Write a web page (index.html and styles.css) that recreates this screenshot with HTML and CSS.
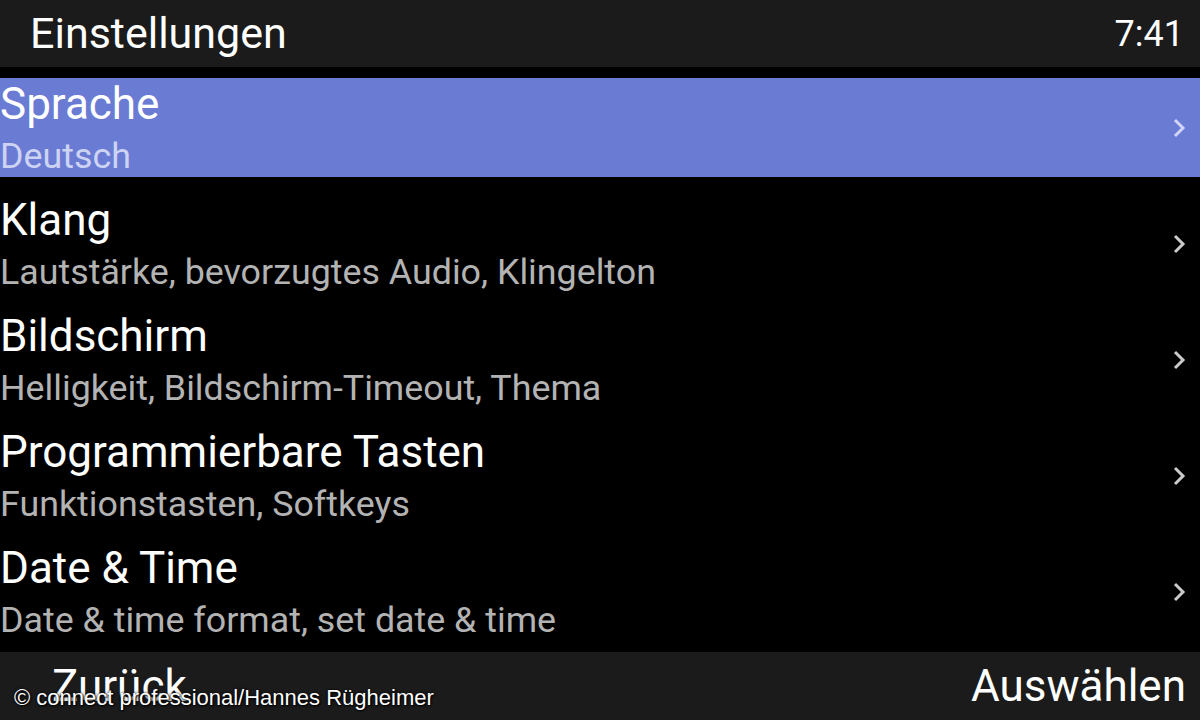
FILE: index.html
```html
<!DOCTYPE html>
<html lang="de">
<head>
    <meta charset="UTF-8">
    <title>Einstellungen</title>
    <link rel="stylesheet" href="styles.css">
</head>
<body>
    <div class="screen">
        <div class="top-bar">
            <span class="top-title">Einstellungen</span>
            <span class="clock">7:41</span>
        </div>
        <div class="menu">
            <div class="item selected">
                <div class="item-text">
                    <span class="item-title">Sprache</span>
                    <span class="item-sub">Deutsch</span>
                </div>
                <svg class="chevron" width="14" height="20" viewBox="0 0 14 20"><path d="M3 2 L11 10 L3 18" fill="none" stroke="currentColor" stroke-width="3"/></svg>
            </div>
            <div class="item">
                <div class="item-text">
                    <span class="item-title">Klang</span>
                    <span class="item-sub">Lautstärke, bevorzugtes Audio, Klingelton</span>
                </div>
                <svg class="chevron" width="14" height="20" viewBox="0 0 14 20"><path d="M3 2 L11 10 L3 18" fill="none" stroke="currentColor" stroke-width="3"/></svg>
            </div>
            <div class="item">
                <div class="item-text">
                    <span class="item-title">Bildschirm</span>
                    <span class="item-sub">Helligkeit, Bildschirm-Timeout, Thema</span>
                </div>
                <svg class="chevron" width="14" height="20" viewBox="0 0 14 20"><path d="M3 2 L11 10 L3 18" fill="none" stroke="currentColor" stroke-width="3"/></svg>
            </div>
            <div class="item">
                <div class="item-text">
                    <span class="item-title">Programmierbare Tasten</span>
                    <span class="item-sub">Funktionstasten, Softkeys</span>
                </div>
                <svg class="chevron" width="14" height="20" viewBox="0 0 14 20"><path d="M3 2 L11 10 L3 18" fill="none" stroke="currentColor" stroke-width="3"/></svg>
            </div>
            <div class="item">
                <div class="item-text">
                    <span class="item-title">Date &amp; Time</span>
                    <span class="item-sub">Date &amp; time format, set date &amp; time</span>
                </div>
                <svg class="chevron" width="14" height="20" viewBox="0 0 14 20"><path d="M3 2 L11 10 L3 18" fill="none" stroke="currentColor" stroke-width="3"/></svg>
            </div>
        </div>
        <div class="bottom-bar">
            <span class="softkey">Zurück</span>
            <span class="softkey">Auswählen</span>
        </div>
        <div class="credit">© connect professional/Hannes Rügheimer</div>
    </div>
</body>
</html>
```

FILE: styles.css
```css
* {
    margin: 0;
    padding: 0;
    box-sizing: border-box;
}
body {
    background: #000;
    font-family: Roboto, "Noto Sans", sans-serif;
    color: #fff;
}
.screen {
    position: relative;
    width: 1200px;
    height: 720px;
    overflow: hidden;
    display: flex;
    flex-direction: column;
}
.top-bar {
    height: 67px;
    background: #1b1b1b;
    display: flex;
    justify-content: space-between;
    align-items: center;
    padding: 0 16px 0 30px;
}
.top-title {
    font-size: 43px;
    line-height: 1;
}
.clock {
    font-size: 36px;
    line-height: 1;
}
.menu {
    flex: 1;
    padding-top: 11px;
    display: flex;
    flex-direction: column;
    gap: 17px;
}
.item {
    height: 99px;
    display: flex;
    align-items: center;
    justify-content: space-between;
    padding-right: 14px;
}
.item-text {
    align-self: flex-start;
    display: flex;
    flex-direction: column;
}
.item-title {
    font-size: 44px;
    line-height: 52px;
}
.item-sub {
    font-size: 35.8px;
    line-height: 48px;
    margin-top: 2px;
    color: #b3b3b3;
}
.chevron {
    color: #cbcbcb;
}
.item.selected {
    background: #6a7bd4;
}
.item.selected .item-sub {
    color: #cdd3f3;
}
.item.selected .chevron {
    color: #d0d5f4;
}
.bottom-bar {
    height: 68px;
    background: #1b1b1b;
    display: flex;
    justify-content: space-between;
    align-items: center;
    padding: 0 14px 0 52px;
}
.softkey {
    font-size: 44px;
    line-height: 1;
}
.credit {
    position: absolute;
    left: 14px;
    bottom: 9px;
    font-family: "Liberation Sans", Arial, sans-serif;
    font-size: 22px;
    color: #fff;
    text-shadow: 0 0 3px #000, 1px 1px 2px #000;
}
```
